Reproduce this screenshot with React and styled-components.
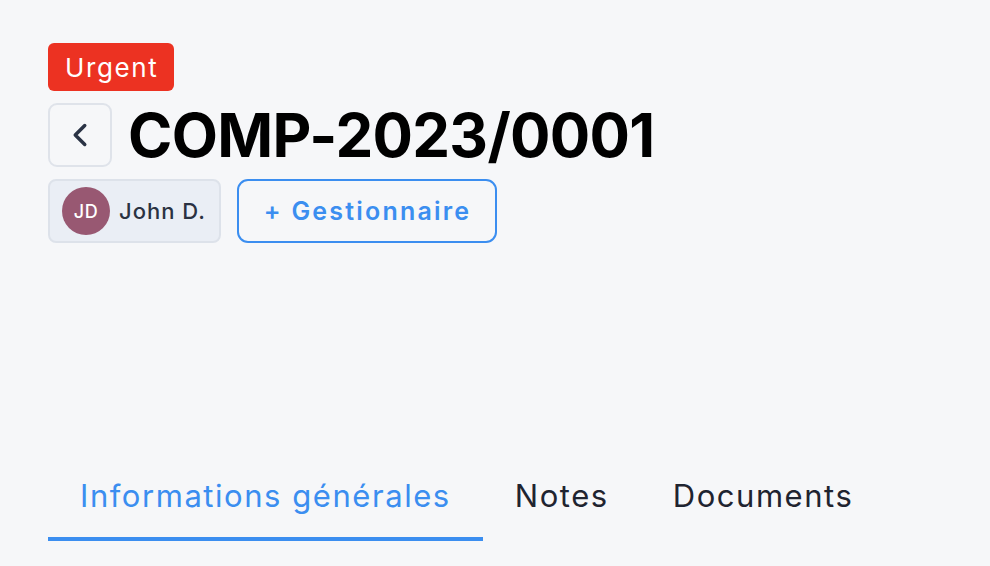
import React from "react";
import styled, { createGlobalStyle } from "styled-components";

const GlobalStyle = createGlobalStyle`
  html, body {
    margin: 0;
    padding: 0;
    background: #f6f7f9;
  }
  body {
    font-family: Inter, "Noto Sans", sans-serif;
    color: #1f2430;
  }
`;

const Page = styled.div`
  min-height: 566px;
  padding: 43px 48px 0;
  box-sizing: border-box;
  display: flex;
  flex-direction: column;
`;

const Header = styled.div`
  display: flex;
  flex-direction: column;
  align-items: flex-start;
  gap: 12px;
`;

const Badge = styled.span`
  display: inline-flex;
  align-items: center;
  height: 48px;
  padding: 0 16px 0 17px;
  box-sizing: border-box;
  border-radius: 6px;
  background: #ec3222;
  color: #ffffff;
  font-size: 26px;
  font-weight: 400;
  letter-spacing: 1.6px;
`;

const TitleRow = styled.div`
  display: flex;
  align-items: center;
  gap: 16px;
`;

const BackButton = styled.button`
  width: 64px;
  height: 64px;
  display: flex;
  align-items: center;
  justify-content: center;
  border: 2px solid #dfe3ea;
  border-radius: 9px;
  background: #f6f7f9;
  color: #2a3345;
  padding: 0;
  cursor: pointer;
`;

const Title = styled.h1`
  margin: 0;
  font-size: 60px;
  font-weight: 700;
  line-height: 64px;
  color: #000000;
  letter-spacing: -0.7px;
`;

const Assignees = styled.div`
  display: flex;
  align-items: center;
  gap: 16px;
`;

const UserChip = styled.div`
  display: flex;
  align-items: center;
  gap: 9px;
  height: 64px;
  padding: 0 13px 0 12px;
  box-sizing: border-box;
  border: 2px solid #dde2ea;
  border-radius: 8px;
  background: #eaeef5;
  font-size: 22px;
  font-weight: 500;
  letter-spacing: 1px;
  color: #2a3242;
`;

const Avatar = styled.span`
  width: 48px;
  height: 48px;
  border-radius: 50%;
  background: ${(p) => p.$color};
  color: #ffffff;
  font-size: 18px;
  font-weight: 500;
  letter-spacing: 0.5px;
  display: flex;
  align-items: center;
  justify-content: center;
`;

const AddButton = styled.button`
  height: 64px;
  padding: 0 24px 0 25px;
  box-sizing: border-box;
  border: 2px solid #3b8ef0;
  border-radius: 11px;
  background: transparent;
  color: #3b8ef0;
  font-family: inherit;
  font-size: 25px;
  font-weight: 600;
  letter-spacing: 2.2px;
  cursor: pointer;
`;

const Tabs = styled.nav`
  display: flex;
  margin-top: 225px;
`;

const Tab = styled.button`
  border: none;
  background: transparent;
  padding: 10px 32px 23px;
  font-family: inherit;
  font-size: 31px;
  font-weight: 400;
  line-height: 36px;
  letter-spacing: 1.55px;
  color: ${(p) => (p.$active ? "#3b8ef0" : "#1f2430")};
  border-bottom: 4px solid ${(p) => (p.$active ? "#3b8ef0" : "transparent")};
  cursor: pointer;
`;

const ChevronLeft = () => (
  <svg width="38" height="38" viewBox="0 0 24 24" fill="none" stroke="currentColor" strokeWidth="2.2" strokeLinecap="round" strokeLinejoin="round">
    <path d="m15 18-6-6 6-6" />
  </svg>
);

export default function App() {
  const tabs = ["Informations générales", "Notes", "Documents"];
  const [active, setActive] = React.useState(0);
  return (
    <>
      <GlobalStyle />
      <Page>
        <Header>
          <Badge>Urgent</Badge>
          <TitleRow>
            <BackButton aria-label="Retour">
              <ChevronLeft />
            </BackButton>
            <Title>COMP-2023/0001</Title>
          </TitleRow>
          <Assignees>
            <UserChip>
              <Avatar $color="#985872">JD</Avatar>
              John D.
            </UserChip>
            <AddButton>+ Gestionnaire</AddButton>
          </Assignees>
        </Header>
        <Tabs>
          {tabs.map((t, i) => (
            <Tab key={t} $active={i === active} onClick={() => setActive(i)}>
              {t}
            </Tab>
          ))}
        </Tabs>
      </Page>
    </>
  );
}
